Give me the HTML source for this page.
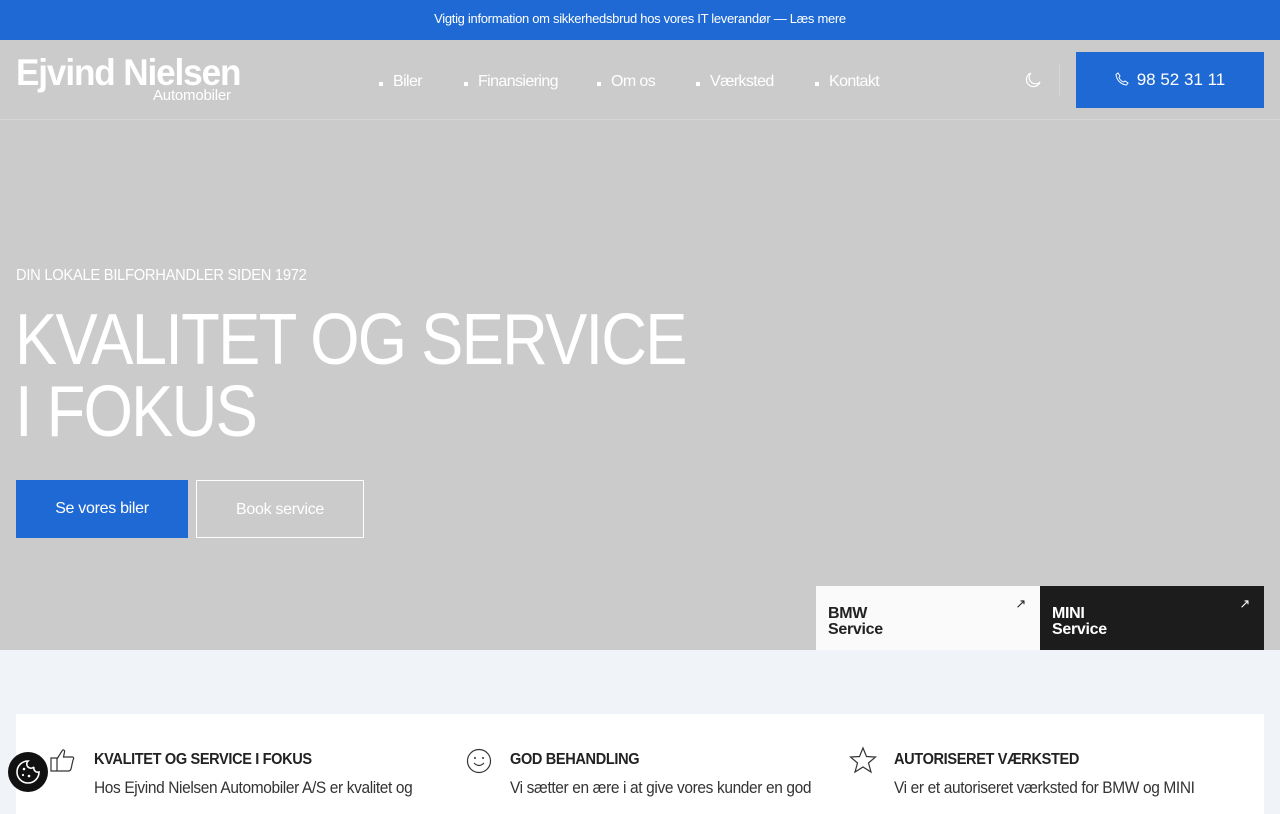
<!DOCTYPE html>
<html><head><meta charset="utf-8"><style>
*{margin:0;padding:0;box-sizing:border-box}
body{width:1280px;height:800px;overflow:hidden;font-family:"Liberation Sans",sans-serif;background:#f0f3f8;position:relative}
.top{height:40px;background:#1e69d4;color:#fff;font-size:13px;text-align:center;line-height:38px;letter-spacing:-0.3px}
.hero{position:absolute;top:40px;left:0;width:1280px;height:610px;background:#cbcbcb;color:#fff}
.hdr{height:80px;border-bottom:1px solid #d6d6d6;position:relative}
.logo1{position:absolute;left:16px;top:12px;font-size:37px;font-weight:bold;letter-spacing:-1.2px;transform:scaleX(.95);transform-origin:left}
.logo2{position:absolute;left:153px;top:47px;font-size:15px;letter-spacing:-0.2px}
.nav{position:absolute;top:33px;font-size:16px;letter-spacing:-0.6px}
.nav span{position:absolute;white-space:nowrap}
.nav span:before{content:"";position:absolute;left:-14px;top:9px;width:4px;height:4px;background:#fff}
.sep{position:absolute;left:1059px;top:24px;width:1px;height:32px;background:#d6d6d6}
.phone{position:absolute;left:1076px;top:12px;width:188px;height:56px;background:#1e69d4;font-size:17px;line-height:56px;text-align:center}
.sub{position:absolute;left:16px;top:227px;font-size:16px;letter-spacing:-0.3px;transform:scaleX(.92);transform-origin:left;white-space:nowrap}
h1{position:absolute;left:15px;top:264px;font-weight:normal;font-size:72px;line-height:72px;letter-spacing:-2px;transform:scaleX(.88);transform-origin:left;white-space:nowrap}
.b1{position:absolute;left:16px;top:440px;width:172px;height:58px;background:#1e69d4;font-size:16px;text-align:center;line-height:58px;letter-spacing:-0.3px}
.b2{position:absolute;left:196px;top:440px;width:168px;height:58px;border:1px solid #fff;font-size:16px;text-align:center;line-height:58px;letter-spacing:-0.3px}
.card{position:absolute;top:546px;width:224px;height:64px;padding:20px 12px;font-weight:bold;font-size:16px;line-height:16px;letter-spacing:-0.3px}
.card i{position:absolute;right:14px;top:10px;font-style:normal;font-weight:normal;font-size:13px}
.box{position:absolute;left:16px;top:714px;width:1248px;height:100px;background:#fff}
.f{position:absolute;top:751px;color:#222;transform:scaleX(.91);transform-origin:left;white-space:nowrap}
.f b{display:block;font-size:16px;letter-spacing:-0.4px;margin-bottom:9px}
.f p{font-size:17px;color:#333;letter-spacing:-0.4px}
.ck{position:absolute;left:8px;top:752px;width:40px;height:40px;border-radius:50%;background:#111}
</style></head><body>
<div class="top">Vigtig information om sikkerhedsbrud hos vores IT leverandør — Læs mere</div>
<div class="hero">
<div class="hdr">
<div class="logo1">Ejvind Nielsen</div><div class="logo2">Automobiler</div>
<div class="nav"><span style="left:393px">Biler</span><span style="left:478px">Finansiering</span><span style="left:611px">Om os</span><span style="left:710px">Værksted</span><span style="left:829px">Kontakt</span></div>
<svg style="position:absolute;left:1024px;top:31px" width="18" height="18" viewBox="0 0 18 18"><path d="M7 2A7 7 0 1 0 16 11A6 6 0 0 1 7 2Z" fill="none" stroke="#fff" stroke-width="1.2"/></svg>
<div class="sep"></div>
<div class="phone"><svg width="14" height="14" viewBox="0 0 14 14" style="vertical-align:-1px;margin-right:8px"><path d="M3 1L5 4L4 5.5C5 8 6 9 8.5 10L10 9L13 11L11.5 13C6 12.5 1.5 8 1 2.5Z" fill="none" stroke="#fff" stroke-width="1"/></svg>98 52 31 11</div>
</div>
<div class="sub">DIN LOKALE BILFORHANDLER SIDEN 1972</div>
<h1>KVALITET OG SERVICE<br>I FOKUS</h1>
<div class="b1">Se vores biler</div><div class="b2">Book service</div>
<div class="card" style="left:816px;background:#fafafa;color:#222">BMW<br>Service<i>↗</i></div>
<div class="card" style="left:1040px;background:#1c1c1c;color:#fff">MINI<br>Service<i>↗</i></div>
</div>
<div class="box"></div>
<svg style="position:absolute;left:50px;top:747px" width="26" height="26" viewBox="0 0 26 26"><path d="M1 11H7V24H1ZM7 12L12 4C13 2 15 3 14.5 5L13.5 10H22C24 10 24 12 23 13L21 22C20.5 23.5 19.5 24 18 24H7" fill="none" stroke="#333" stroke-width="1.2"/></svg>
<svg style="position:absolute;left:466px;top:748px" width="26" height="26" viewBox="0 0 26 26"><circle cx="13" cy="13" r="11.5" fill="none" stroke="#333" stroke-width="1.2"/><circle cx="9" cy="10" r="1" fill="#333"/><circle cx="17" cy="10" r="1" fill="#333"/><path d="M8 15Q13 20 18 15" fill="none" stroke="#333" stroke-width="1.2"/></svg>
<svg style="position:absolute;left:849px;top:746px" width="28" height="28" viewBox="0 0 28 28"><path d="M14 2L17.5 10.5L26.5 11L19.5 17L22 26L14 21L6 26L8.5 17L1.5 11L10.5 10.5Z" fill="none" stroke="#333" stroke-width="1.2"/></svg>
<div class="f" style="left:94px"><b>KVALITET OG SERVICE I FOKUS</b><p>Hos Ejvind Nielsen Automobiler A/S er kvalitet og</p></div>
<div class="f" style="left:510px"><b>GOD BEHANDLING</b><p>Vi sætter en ære i at give vores kunder en god</p></div>
<div class="f" style="left:894px"><b>AUTORISERET VÆRKSTED</b><p>Vi er et autoriseret værksted for BMW og MINI</p></div>
<div class="ck"><svg width="40" height="40" viewBox="0 0 40 40"><path d="M20 9A11 11 0 1 0 31 20A4 4 0 0 1 26 15A4 4 0 0 1 20 9Z" fill="none" stroke="#fff" stroke-width="1.6"/><circle cx="16" cy="17" r="1.3" fill="#fff"/><circle cx="21" cy="24" r="1.3" fill="#fff"/><circle cx="15" cy="23" r="1.1" fill="#fff"/></svg></div>
</body></html>
